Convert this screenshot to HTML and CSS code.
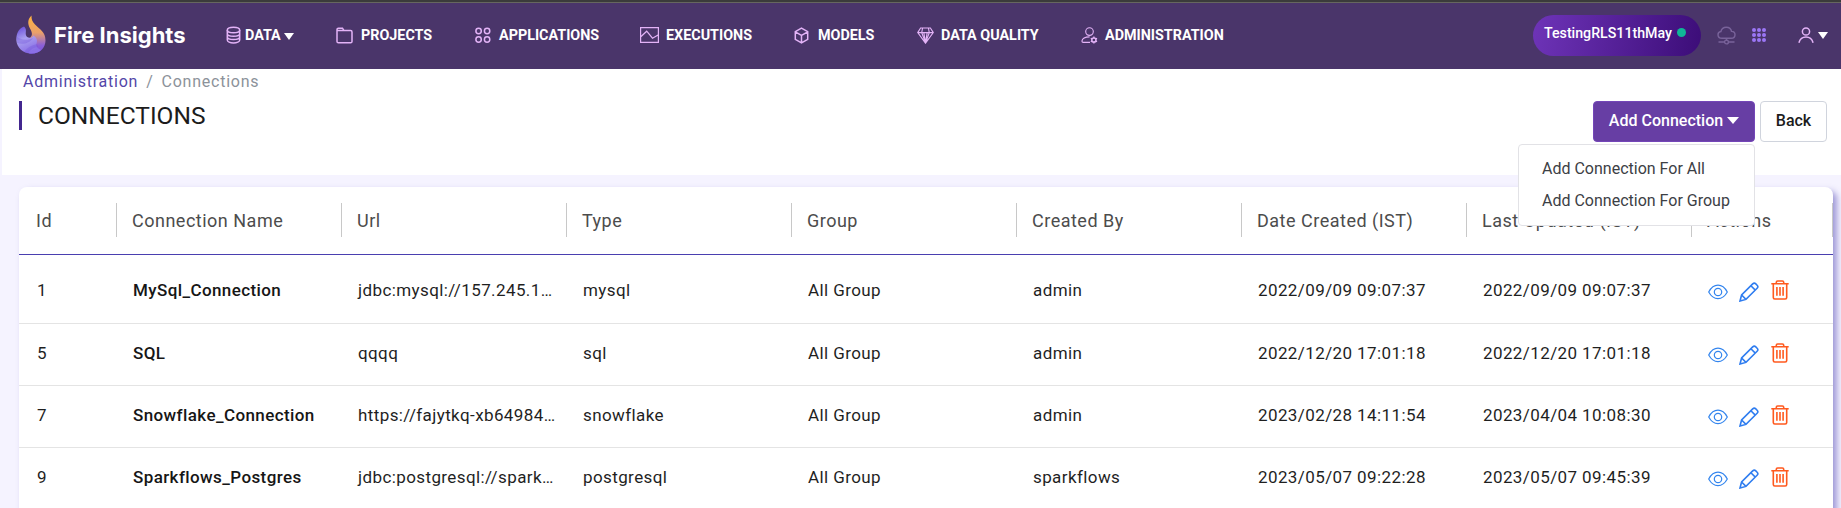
FILE: index.html
```html
<!DOCTYPE html>
<html lang="en">
<head>
<meta charset="utf-8">
<title>Connections</title>
<link rel="stylesheet" href="styles.css">
</head>
<body>
<svg class="defs" width="0" height="0">
  <symbol id="eye" viewBox="0 0 20 16"><path d="M.7 8C3 3.800 6.300 1.200 10 1.200S17 3.800 19.300 8C17 12.200 13.700 14.600 10 14.600S3 12.200.7 8z"/><circle cx="10" cy="8" r="3.700"/></symbol>
  <symbol id="pencil" viewBox="0 0 20 20"><path d="M1 19l1.600-6L13.700 1.900a2.200 2.200 0 0 1 3.100 0l1.300 1.300a2.200 2.200 0 0 1 0 3.100L7 17.400z M2.600 13l4.400 4.400 M11.900 3.700l4.400 4.400"/></symbol>
  <symbol id="trash" viewBox="0 0 18 20"><path d="M.3 3.700h17.400M5.300 3.500V2.300Q5.300 1 6.600 1h4.800q1.300 0 1.300 1.300v1.200M2.300 4v13.500q0 1.500 1.500 1.500h10.400q1.500 0 1.500-1.500V4M5.900 7v8.800M9 7v8.800M12.100 7v8.800"/></symbol>
</svg>
<div class="strip"></div>
<header class="topbar">
  <a class="brand">
    <svg width="30" height="40" viewBox="0 0 30 40">
      <defs>
        <linearGradient id="flame" x1="0" y1="0" x2="0" y2="1"><stop offset="0" stop-color="#ffb43d"/><stop offset=".45" stop-color="#eaa06a"/><stop offset=".78" stop-color="#8b5fd8"/><stop offset="1" stop-color="#7650dc"/></linearGradient>
        <linearGradient id="drop" x1="0" y1="0" x2=".4" y2="1"><stop offset="0" stop-color="#6144d6"/><stop offset=".5" stop-color="#aaa0f0"/><stop offset="1" stop-color="#8a6fe6"/></linearGradient>
      </defs>
      <path fill="url(#flame)" d="M15.500.500C11.500 4 11.500 9 14 13.500C17 18.500 16.500 22 12 24L13 38.500C23 40 29.500 33 29.500 25.500C29.500 17 24 14.500 19 9.500C16 6.500 15.400 4 15.500.500z"/>
      <path fill="url(#drop)" d="M8 11.500C2 14 .3 19 .3 25C1 33 7 38.500 15 38.500C20 38.500 23 37 25 35C21 33 20 31 20.500 28.500C22 25 20 22 17.500 20.500C16.500 23.500 10.500 24 9.800 19.500C9.500 17 11 14 8 11.500z"/>
      <path fill="#6d4bd8" opacity=".3" d="M1 22c5 3 10 4 16 1-3 5-10 7-16 5zM8 37c4-5 8-7 13-8l1 3c-4 0-7 2-10 6z"/>
    </svg>
    <span class="brand-name">Fire Insights</span>
  </a>
  <nav class="nav">
    <a class="nav-item n-data"><svg width="16" height="18" viewBox="0 0 16 18"><ellipse cx="7.500" cy="4" rx="6.200" ry="2.800"/><path d="M1.300 4v10c0 1.600 2.800 2.900 6.200 2.900s6.200-1.300 6.200-2.900V4M1.300 7.400c0 1.600 2.800 2.800 6.200 2.800s6.200-1.200 6.200-2.800M1.300 10.800c0 1.600 2.800 2.800 6.200 2.800s6.200-1.200 6.200-2.800"/></svg><span>DATA</span><i class="caret"></i></a>
    <a class="nav-item n-projects"><svg width="17" height="17" viewBox="0 0 17 17"><path d="M1 14.500V2.600Q1 1.200 2.400 1.200h4.100L8 3.600h6.600Q16 3.600 16 5v9.500q0 1.300-1.400 1.300H2.400Q1 15.800 1 14.500zM1 3.600h7"/></svg><span>PROJECTS</span></a>
    <a class="nav-item n-apps"><svg width="16" height="17" viewBox="0 0 16 17"><circle cx="3.600" cy="4" r="2.700"/><circle cx="12.100" cy="4" r="2.700"/><circle cx="3.600" cy="12.500" r="2.700"/><circle cx="12.100" cy="12.500" r="2.700"/></svg><span>APPLICATIONS</span></a>
    <a class="nav-item n-exec"><svg width="19" height="16" viewBox="0 0 19 16"><path stroke-width="1.200" d="M.6.600h17.800v14.800H.6zM.8 9.700L6.700 4.200l5.800 7 5.600-3.300"/></svg><span>EXECUTIONS</span></a>
    <a class="nav-item n-models"><svg width="15" height="17" viewBox="0 0 15 17"><path d="M7.500 1.200l6.200 3.500v7.600l-6.200 3.500-6.200-3.500V4.700zM1.300 4.900l6.200 3.600 6.200-3.600M7.500 8.500v7.300"/></svg><span>MODELS</span></a>
    <a class="nav-item n-quality"><svg width="17" height="17" viewBox="0 0 17 17"><path stroke-width="1.100" d="M3.600 1h9.800l2.900 4.600-7.800 10.600L.7 5.600zM.7 5.600h15.600M5.600 1L4.700 5.600l3.800 10.200 3.800-10.200L11.400 1M6.800 5.600l1.700 10 1.700-10"/></svg><span>DATA QUALITY</span></a>
    <a class="nav-item n-admin"><svg width="17" height="17" viewBox="0 0 17 17"><g stroke-width="1.100"><circle cx="8.500" cy="4.600" r="3.800"/><path d="M9 15.400H2.200Q.9 15.400.9 14.100C1.300 11.500 4 9.900 8.600 9.900"/><circle cx="12.900" cy="13" r="2.100" stroke-width="1.500"/><path stroke-width="1.300" d="M12.900 9.500v1.400M12.900 15.100v1.400M9.800 11.200l1.300.8M14.700 14l1.300.8M9.800 14.800l1.300-.8M14.700 12l1.300-.8"/></g></svg><span>ADMINISTRATION</span></a>
  </nav>
  <div class="tools">
    <span class="pill">TestingRLS11thMay<i class="dot"></i></span>
    <svg class="cloud" width="19" height="19" viewBox="0 0 19 19"><path d="M5 12.200C2.500 12.200 1 10.800 1 8.700 1 6.900 2.200 5.700 3.900 5.500 4.500 3 6.500 1.300 9.300 1.300c2.800 0 4.800 1.700 5.200 4.100 2 .1 3.500 1.400 3.500 3.300 0 2.100-1.500 3.500-3.800 3.500zM9.500 12.500v2.500M1.500 16h5.800M11.700 16h5.800"/><circle cx="9.500" cy="16" r="1.900"/></svg>
    <svg class="apps" width="14" height="14" viewBox="0 0 14 14"><circle cx="2" cy="2" r="2"/><circle cx="7" cy="2" r="2"/><circle cx="12" cy="2" r="2"/><circle cx="2" cy="7" r="2"/><circle cx="7" cy="7" r="2"/><circle cx="12" cy="7" r="2"/><circle cx="2" cy="12" r="2"/><circle cx="7" cy="12" r="2"/><circle cx="12" cy="12" r="2"/></svg>
    <svg class="user" width="16" height="16" viewBox="0 0 16 16"><circle cx="8" cy="4.500" r="3.600"/><path d="M.9 15.700C2 12 4.500 10.100 8 10.100s6 1.900 7.100 5.600"/></svg>
    <i class="caret"></i>
  </div>
</header>

<section class="page-head">
  <div>
    <div class="crumbs"><a>Administration</a><span class="slash">/</span><span>Connections</span></div>
    <h1 class="title">CONNECTIONS</h1>
  </div>
  <div class="actions">
    <div class="dropdown">
      <button class="btn primary">Add Connection<i class="caret wide"></i></button>
      <div class="menu"><a>Add Connection For All</a><a>Add Connection For Group</a></div>
    </div>
    <button class="btn back">Back</button>
  </div>
</section>

<main class="card">
  <div class="row head"><div>Id</div><div>Connection Name</div><div>Url</div><div>Type</div><div>Group</div><div>Created By</div><div>Date Created (IST)</div><div>Last Updated (IST)</div><div>Actions</div></div>
  <div class="row first"><div>1</div><div class="name">MySql_Connection</div><div>jdbc:mysql://157.245.1…</div><div>mysql</div><div>All Group</div><div>admin</div><div>2022/09/09 09:07:37</div><div>2022/09/09 09:07:37</div><div class="icons"><svg class="eye"><use href="#eye"/></svg><svg class="pencil"><use href="#pencil"/></svg><svg class="trash"><use href="#trash"/></svg></div></div>
  <div class="row"><div>5</div><div class="name">SQL</div><div>qqqq</div><div>sql</div><div>All Group</div><div>admin</div><div>2022/12/20 17:01:18</div><div>2022/12/20 17:01:18</div><div class="icons"><svg class="eye"><use href="#eye"/></svg><svg class="pencil"><use href="#pencil"/></svg><svg class="trash"><use href="#trash"/></svg></div></div>
  <div class="row"><div>7</div><div class="name">Snowflake_Connection</div><div>https://fajytkq-xb64984…</div><div>snowflake</div><div>All Group</div><div>admin</div><div>2023/02/28 14:11:54</div><div>2023/04/04 10:08:30</div><div class="icons"><svg class="eye"><use href="#eye"/></svg><svg class="pencil"><use href="#pencil"/></svg><svg class="trash"><use href="#trash"/></svg></div></div>
  <div class="row"><div>9</div><div class="name">Sparkflows_Postgres</div><div>jdbc:postgresql://spark…</div><div>postgresql</div><div>All Group</div><div>sparkflows</div><div>2023/05/07 09:22:28</div><div>2023/05/07 09:45:39</div><div class="icons"><svg class="eye"><use href="#eye"/></svg><svg class="pencil"><use href="#pencil"/></svg><svg class="trash"><use href="#trash"/></svg></div></div>
</main>
</body>
</html>
```

FILE: styles.css
```css
* { box-sizing: border-box; }
body {
  margin: 0;
  height: 508px;
  overflow: hidden;
  background: #f5f3ff;
  font-family: Roboto, "Liberation Sans", sans-serif;
  font-size: 16px;
  color: #212529;
}
svg { display: block; flex: none; fill: none; }
.defs { position: absolute; }
.strip { height: 3px; background: #3b3b3b; border-bottom: 1px solid #66665f; }

.topbar {
  height: 66px;
  background: #4a356a;
  display: flex;
  align-items: center;
  padding: 0 13px 2px 16px;
  color: #fff;
}
.brand { display: flex; width: 210px; gap: 8px; align-items: center; }
.brand-name { font: 700 22px/30px Inter, sans-serif; white-space: nowrap; }
.nav { display: flex; flex: 1; font-size: 14.350px; font-weight: 700; line-height: 20px; }
.nav-item { display: flex; align-items: center; white-space: nowrap; }
.nav-item span { padding-top: 2px; }
.nav-item svg { stroke: #e3b3f7; stroke-width: 1.500; }
.n-data { width: 110px; gap: 3px; }
.n-projects { width: 139px; gap: 8px; }
.n-apps { width: 165px; gap: 8px; }
.n-exec { width: 154px; gap: 7px; }
.n-models { width: 123px; gap: 9px; }
.n-quality { width: 164px; gap: 7px; }
.n-admin { gap: 7px; }
.caret {
  width: 0;
  height: 0;
  border: 5px solid transparent;
  border-top: 7px solid #fff;
  border-bottom: 0;
}
.nav .caret { margin-top: 2px; }
.wide { border-left-width: 6px; border-right-width: 6px; }

.tools { display: flex; align-items: center; }
.pill {
  width: 168px;
  height: 41px;
  padding: 0 0 5px 11px;
  border-radius: 21px;
  background: linear-gradient(100deg, #6e34b8, #3c0d78);
  display: flex;
  align-items: center;
  gap: 5px;
  font-size: 14.200px;
  font-weight: 500;
}
.dot { width: 9px; height: 9px; border-radius: 50%; background: #10b597; }
.cloud { margin-left: 16px; stroke: #79639a; stroke-width: 1.400; }
.apps { margin-left: 16px; fill: #9b76f5; }
.user { margin-left: 32px; margin-right: 4px; stroke: #e3b3f7; stroke-width: 1.500; }

.page-head {
  height: 106px;
  margin-left: 2px;
  padding: 0 14px 0 17px;
  background: #fff;
  display: flex;
  justify-content: space-between;
}
.crumbs { display: flex; padding: 1px 0 0 4px; line-height: 24px; letter-spacing: .76px; color: #8c929a; white-space: nowrap; }
.crumbs a { color: #5346a8; }
.slash { margin: 0 8px; }
.title {
  margin: 7px 0 0;
  height: 29px;
  padding-left: 16px;
  border-left: 3px solid #43278f;
  font-size: 24.500px;
  font-weight: 400;
  line-height: 30px;
  color: #1c1c1c;
}
.actions { display: flex; gap: 5px; padding-top: 32px; }
.dropdown { position: relative; }
.btn {
  height: 41px;
  display: flex;
  align-items: center;
  justify-content: center;
  border-radius: 4px;
  font: 500 16px Roboto, sans-serif;
  white-space: nowrap;
  padding: 0 0 2px;
}
.primary { width: 162px; gap: 4px; background: #673ea4; border: 1px solid #7446b8; color: #fff; }
.back { width: 67px; background: #fff; border: 1px solid #d0d4dd; color: #1c1c1c; }
.menu {
  position: absolute;
  z-index: 2;
  top: 43px;
  right: 0;
  width: 237px;
  height: 82px;
  padding: 8px 0 8px 23px;
  border: 1px solid #e2e2e6;
  border-radius: 4px;
  background: #fff;
}
.menu a { display: block; line-height: 32px; white-space: nowrap; color: #3c4045; }

.card {
  margin: 12px 8px 0 19px;
  height: 340px;
  border-radius: 8px 8px 0 0;
  background: #fff;
  box-shadow: 4px 4px 6px rgba(74, 63, 176, .5);
}
.row {
  display: grid;
  grid-template-columns: 98px repeat(7, 225px) 141px;
  height: 62px;
  border-bottom: 1px solid #e4e4e4;
  align-items: center;
  padding-bottom: 3px;
  font-size: 17px;
  letter-spacing: .4px;
  color: #1f1f1f;
}
.row > div { padding-left: 18px; white-space: nowrap; }
.row > div + div { padding-left: 16px; }
.row .name { font-weight: 500; color: #161616; }
.head {
  height: 68px;
  padding: 0 0 1px;
  border-bottom: 1px solid #4a3fb0;
  font-size: 18px;
  letter-spacing: .5px;
  color: #4c4c4c;
}
.head > div { height: 34px; line-height: 35px; border-right: 1px solid #c8c8c8; padding-left: 17px; }
.head > div + div { padding-left: 15px; }
.first { height: 69px; padding-bottom: 0; padding-top: 1px; }
.row .icons { display: flex; align-items: center; gap: 11px; }
.icons svg { stroke-width: 1.600; }
.row .eye { width: 20px; height: 16px; stroke: #3385ee; stroke-width: 1.200; transform: translateY(2px); }
.pencil { width: 20px; height: 20px; stroke: #2f7df0; transform: translateY(2px); }
.trash { width: 18px; height: 20px; stroke: #ff5a1f; margin-left: 1px; }
```
